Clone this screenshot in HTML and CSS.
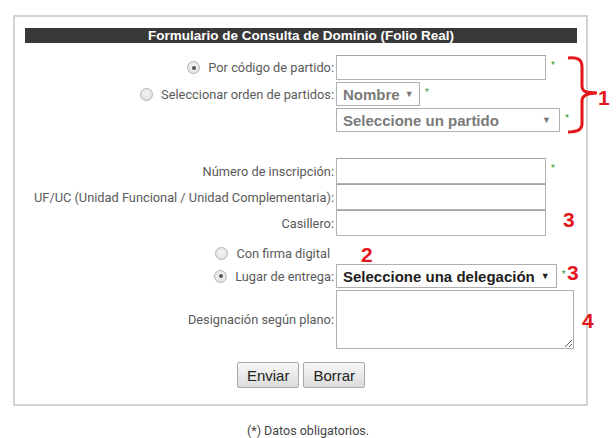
FILE: index.html
```html
<!DOCTYPE html>
<html lang="es">
<head>
<meta charset="utf-8">
<title>Formulario de Consulta de Dominio</title>
<link rel="stylesheet" href="styles.css">
</head>
<body>
<div class="page">
  <div class="panel">
    <div class="header">Formulario de Consulta de Dominio (Folio Real)</div>
    <div class="form">
      <div class="row r1">
        <label class="lbl"><span class="radio checked"></span>Por código de partido:</label>
        <div class="input w210"></div>
        <span class="req">*</span>
      </div>
      <div class="row r2">
        <label class="lbl"><span class="radio"></span>Seleccionar orden de partidos:</label>
        <div class="select w84 muted"><span>Nombre</span><span class="arrow">▼</span></div>
        <span class="req">*</span>
      </div>
      <div class="row r3">
        <span class="lbl"></span>
        <div class="select w224 muted"><span>Seleccione un partido</span><span class="arrow">▼</span></div>
        <span class="req">*</span>
      </div>
      <div class="row r4">
        <label class="lbl">Número de inscripción:</label>
        <div class="input tall w210"></div>
        <span class="req">*</span>
      </div>
      <div class="row r5">
        <label class="lbl">UF/UC (Unidad Funcional / Unidad Complementaria):</label>
        <div class="input tall w210"></div>
      </div>
      <div class="row r5">
        <label class="lbl">Casillero:</label>
        <div class="input tall w210"></div>
      </div>
      <div class="row r6">
        <label class="lbl firma"><span class="radio"></span>Con firma digital</label>
      </div>
      <div class="row r7">
        <label class="lbl"><span class="radio checked"></span>Lugar de entrega:</label>
        <div class="select dark"><span>Seleccione una delegación</span><span class="arrow">▼</span></div>
        <span class="req">*</span>
      </div>
      <div class="row r8">
        <label class="lbl">Designación según plano:</label>
        <textarea class="area"></textarea>
      </div>
      <div class="buttons">
        <button class="btn" type="button">Enviar</button>
        <button class="btn" type="button">Borrar</button>
      </div>
    </div>
  </div>
  <p class="note">(*) Datos obligatorios.</p>

  <svg class="brace" width="36" height="82" viewBox="0 0 36 82">
    <path d="M3,3 C12,2 17,4 17,12 L17,31 C17,37 22,38 32,38 C22,38 17,40 17,46 L17,69 C17,75 12,77 3,77" fill="none" stroke="#e3161c" stroke-width="3"/>
  </svg>
  <span class="ann a1">1</span>
  <span class="ann a2">2</span>
  <span class="ann a3">3</span>
  <span class="ann a3b">3</span>
  <span class="ann a4">4</span>
</div>
</body>
</html>
```
FILE: styles.css
```css
* { box-sizing: border-box; }
html, body { margin: 0; padding: 0; background: #fff; }
body { font-family: Roboto, "Liberation Sans", sans-serif; }

.page {
  position: relative;
  width: 616px;
  height: 438px;
  overflow: hidden;
  padding-top: 15px;
}

.panel {
  margin-left: 13px;
  width: 575px;
  border: 2px solid #d2d2d2;
  padding: 11px 9px 16px 10px;
}

.header {
  height: 15px;
  background: #383838;
  color: #fff;
  font-family: "Liberation Sans", Arial, sans-serif;
  font-weight: bold;
  font-size: 13.5px;
  line-height: 15px;
  text-align: center;
}

.form { display: flex; flex-direction: column; }

.row {
  display: flex;
  align-items: center;
  gap: 2px;
}
.r1 { margin-top: 12px; }
.r2 { margin-top: 2px; }
.r3 { margin-top: 2px; }
.r4 { margin-top: 26px; }
.r6 { margin-top: 7px; height: 20px; }
.r7 { margin-top: 1px; }
.r8 { margin-top: 2px; }

.lbl {
  width: 309px;
  flex: none;
  display: flex;
  align-items: center;
  justify-content: flex-end;
  font-size: 12.8px;
  color: #5a5a5a;
  white-space: nowrap;
}
.lbl.firma { padding-right: 4px; }

.radio {
  width: 13px;
  height: 13px;
  border-radius: 50%;
  border: 1px solid #b4b4b4;
  background: radial-gradient(circle at 50% 40%, #f4f4f4 0%, #dcdcdc 100%);
  margin-right: 8px;
  position: relative;
  flex: none;
}
.radio.checked::after {
  content: "";
  position: absolute;
  left: 3.5px;
  top: 3.5px;
  width: 4px;
  height: 4px;
  border-radius: 50%;
  background: #555;
}

.input {
  height: 25px;
  border: 1px solid #b3b3b3;
  border-top-color: #a4a4a4;
  background: #fff;
}
.input.tall { height: 26px; }
.w210 { width: 210px; }

.select {
  height: 24px;
  border: 1px solid #b0b0b0;
  background: #fff;
  display: flex;
  align-items: center;
  justify-content: space-between;
  gap: 5px;
  padding: 0 8px 0 6px;
  font-family: "Liberation Sans", Arial, sans-serif;
  font-weight: bold;
  font-size: 15px;
}
.select.muted { color: #7a7a7a; }
.select.dark { color: #1e1e1e; padding-right: 6px; gap: 6px; }
.w84 { width: 84px; }
.w224 { width: 224px; }
.arrow { font-size: 9px; color: #777; }
.select.dark .arrow { color: #222; }

.req {
  align-self: flex-start;
  margin-left: 3px;
  margin-top: 6px;
  font-size: 9px;
  line-height: 9px;
  color: #2f9a2f;
}

.area {
  width: 238px;
  height: 59px;
  border: 1px solid #b0b0b0;
  margin: 0;
  resize: both;
  font: inherit;
}

.buttons {
  margin-top: 13px;
  display: flex;
  justify-content: center;
  gap: 4px;
}
.btn {
  height: 26px;
  padding: 0 9px;
  border: 1px solid #a8a8a8;
  border-radius: 2px;
  background: linear-gradient(#f7f7f7, #dcdcdc);
  font-family: "Liberation Sans", Arial, sans-serif;
  font-size: 15px;
  color: #222;
}

.note {
  margin: 17px 0 0;
  text-align: center;
  font-size: 12.5px;
  color: #444;
}

.brace { position: absolute; left: 565px; top: 55px; }
.ann {
  position: absolute;
  font-family: "Liberation Sans", Arial, sans-serif;
  font-weight: bold;
  font-size: 21px;
  line-height: 21px;
  color: #e3161c;
}
.a1 { left: 598px; top: 87px; }
.a2 { left: 361px; top: 244px; }
.a3 { left: 563px; top: 209px; }
.a3b { left: 567px; top: 262px; }
.a4 { left: 582px; top: 310px; }
```
